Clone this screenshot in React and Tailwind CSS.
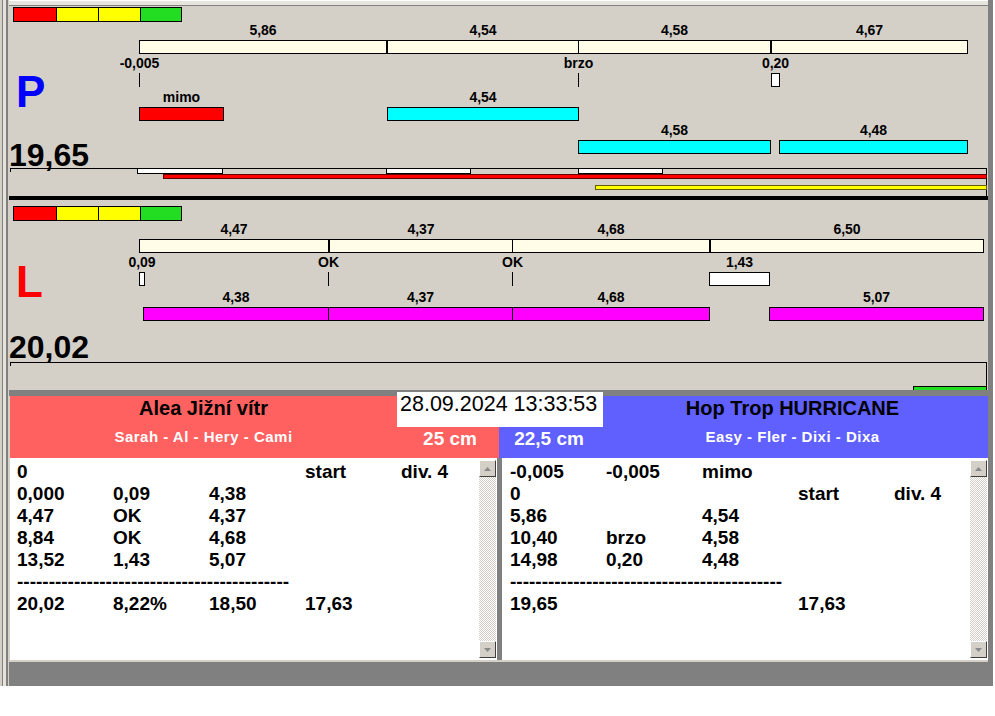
import React from "react";

// panel coordinates are relative to the chart panel (x from 9, y from top of panel)
const panelP = {
  top: [
    { x0: 130, x1: 377, label: "5,86" },
    { x0: 378, x1: 569, label: "4,54" },
    { x0: 569, x1: 761, label: "4,58" },
    { x0: 762, x1: 958, label: "4,67" },
  ],
  topY: 34,
  marksY: 67,
  marks: [
    { kind: "tick", x: 130, label: "-0,005" },
    { kind: "tick", x: 569, label: "brzo" },
    { kind: "box", x0: 762, x1: 770, label: "0,20" },
  ],
  rows: [
    { y: 101, bars: [
      { x0: 130, x1: 214, label: "mimo", color: "bg-[#ff0000]" },
      { x0: 378, x1: 569, label: "4,54", color: "bg-[#00ffff]" },
    ] },
    { y: 134, bars: [
      { x0: 569, x1: 761, label: "4,58", color: "bg-[#00ffff]" },
      { x0: 770, x1: 958, label: "4,48", color: "bg-[#00ffff]" },
    ] },
  ],
};

const panelL = {
  top: [
    { x0: 130, x1: 319, label: "4,47" },
    { x0: 320, x1: 503, label: "4,37" },
    { x0: 503, x1: 700, label: "4,68" },
    { x0: 701, x1: 974, label: "6,50" },
  ],
  topY: 39,
  marksY: 72,
  marks: [
    { kind: "box", x0: 130, x1: 135, label: "0,09" },
    { kind: "tick", x: 319, label: "OK" },
    { kind: "tick", x: 503, label: "OK" },
    { kind: "box", x0: 700, x1: 760, label: "1,43" },
  ],
  rows: [
    { y: 107, bars: [
      { x0: 134, x1: 319, label: "4,38", color: "bg-[#ff00ff]" },
      { x0: 319, x1: 503, label: "4,37", color: "bg-[#ff00ff]" },
      { x0: 503, x1: 700, label: "4,68", color: "bg-[#ff00ff]" },
      { x0: 760, x1: 974, label: "5,07", color: "bg-[#ff00ff]" },
    ] },
  ],
};

const dashes = "-".repeat(43);

const listLeft = [
  ["0", "", "", "start", "div. 4"],
  ["0,000", "0,09", "4,38"],
  ["4,47", "OK", "4,37"],
  ["8,84", "OK", "4,68"],
  ["13,52", "1,43", "5,07"],
  [dashes],
  ["20,02", "8,22%", "18,50", "17,63"],
];

const listRight = [
  ["-0,005", "-0,005", "mimo"],
  ["0", "", "", "start", "div. 4"],
  ["5,86", "", "4,54"],
  ["10,40", "brzo", "4,58"],
  ["14,98", "0,20", "4,48"],
  [dashes],
  ["19,65", "", "", "17,63"],
];

function Label({ x, y, children }) {
  return (
    <span
      className="absolute -translate-x-1/2 whitespace-nowrap text-[14px] font-bold leading-[14px] text-black"
      style={{ left: x, top: y - 17 }}
    >
      {children}
    </span>
  );
}

function Bar({ x0, x1, y, color, label }) {
  return (
    <>
      <div
        className={`absolute h-[14px] border border-black ${color}`}
        style={{ left: x0, top: y, width: x1 - x0 + 1 }}
      />
      {label && <Label x={(x0 + x1 + 1) / 2} y={y}>{label}</Label>}
    </>
  );
}

function Indicator({ top }) {
  return (
    <div className="absolute left-[4px] flex h-[15px] border border-black" style={{ top }}>
      <div className="w-[42px] bg-[#ff0000]" />
      <div className="w-[42px] border-l border-black bg-[#ffff00]" />
      <div className="w-[42px] border-l border-black bg-[#ffff00]" />
      <div className="w-[41px] border-l border-black bg-[#22dd22]" />
    </div>
  );
}

function Chart({ data, letter, letterColor, total, letterTop, totalTop, indTop, children }) {
  return (
    <div className="relative h-[190px] overflow-hidden bg-[#d4d0c8]">
      <Indicator top={indTop} />
      {data.top.map((s) => (
        <Bar key={s.x0} {...s} y={data.topY} color="bg-[#fffce8]" />
      ))}
      {data.marks.map((m, i) =>
        m.kind === "tick" ? (
          <React.Fragment key={i}>
            <div className="absolute h-[14px] w-px bg-black" style={{ left: m.x, top: data.marksY }} />
            <Label x={m.x + 0.5} y={data.marksY}>{m.label}</Label>
          </React.Fragment>
        ) : (
          <Bar key={i} x0={m.x0} x1={m.x1} y={data.marksY} color="bg-white" label={m.label} />
        )
      )}
      {data.rows.map((r) =>
        r.bars.map((b) => <Bar key={`${r.y}-${b.x0}`} {...b} y={r.y} />)
      )}
      <span
        className={`absolute left-[7px] text-[44px] font-bold leading-[44px] ${letterColor}`}
        style={{ top: letterTop }}
      >
        {letter}
      </span>
      <span className="absolute left-0 text-[32px] font-bold leading-[32px] text-black" style={{ top: totalTop }}>
        {total}
      </span>
      {/* timeline at the bottom */}
      <div className="absolute left-[1px] top-[162px] h-px w-[977px] bg-black" />
      <div className="absolute left-[1px] top-[162px] h-[4px] w-px bg-black" />
      <div className="absolute left-[977px] top-[162px] h-[28px] w-px bg-black" />
      {children}
    </div>
  );
}

function ArrowButton({ down }) {
  return (
    <div className="flex h-[17px] w-[17px] items-center justify-center border border-t-white border-l-white border-r-[#404040] border-b-[#404040] bg-[#d4d0c8]">
      <svg width="7" height="4" viewBox="0 0 7 4">
        <path d={down ? "M0 0 L7 0 L3.5 4 Z" : "M0 4 L3.5 0 L7 4 Z"} fill="#8a8a8a" />
      </svg>
    </div>
  );
}

function ScrollBar() {
  return (
    <div className="flex h-full w-[17px] flex-col bg-[repeating-conic-gradient(#d4d0c8_0%_25%,#ffffff_0%_50%)] bg-[length:2px_2px]">
      <ArrowButton />
      <div className="flex-1" />
      <ArrowButton down />
    </div>
  );
}

function ListBox({ rows, width, pad }) {
  return (
    <div className="flex h-[202px] bg-white" style={{ width }}>
      <div
        className="min-w-0 flex-1 overflow-hidden pt-[3px] text-[19px] font-bold leading-[22px] text-black"
        style={{ paddingLeft: pad }}
      >
        {rows.map((r, i) => (
          <div key={i} className="flex h-[22px] whitespace-nowrap">
            {r.length === 1 ? (
              <div>{r[0]}</div>
            ) : (
              r.map((c, j) => (
                <div key={j} className="w-[96px] shrink-0">{c}</div>
              ))
            )}
          </div>
        ))}
      </div>
      <div className="shrink-0 py-[2px] pr-[1px]">
        <ScrollBar />
      </div>
    </div>
  );
}

export default function App() {
  return (
    <div className="relative h-[716px] w-[995px] overflow-hidden bg-white font-['Liberation_Sans',Arial,sans-serif]">
      <div className="flex h-[686px] w-[993px]">
        {/* left window frame */}
        <div className="flex w-[9px]">
          <div className="w-[2px] bg-[#d4d0c8]" />
          <div className="w-px bg-[#808080]" />
          <div className="w-[3px] bg-[#e6e3dc]" />
          <div className="w-[2px] bg-[#808080]" />
          <div className="w-px bg-[#d4d0c8]" />
        </div>

        <div className="flex w-[979px] flex-col">
          <div className="h-[6px] border-t border-t-white border-b border-b-[#808080] bg-[#e8e5de]" />

          <Chart data={panelP} letter="P" letterColor="text-[#0000ff]" total="19,65" letterTop={64} totalTop={133} indTop={1}>
            <div className="absolute left-[128px] top-[162px] h-[6px] w-[86px] border border-black bg-white" />
            <div className="absolute left-[377px] top-[162px] h-[6px] w-[85px] border border-black bg-white" />
            <div className="absolute left-[569px] top-[162px] h-[6px] w-[85px] border border-black bg-white" />
            <div className="absolute left-[154px] top-[168px] h-[5px] w-[824px] border border-[#600000] bg-[#ff0000]" />
            <div className="absolute left-[586px] top-[179px] h-[5px] w-[392px] border border-[#606000] bg-[#ffff00]" />
          </Chart>

          <div className="h-[4px] bg-black" />

          <Chart data={panelL} letter="L" letterColor="text-[#ff0000]" total="20,02" letterTop={60} totalTop={131} indTop={6}>
            <div className="absolute left-[904px] top-[186px] h-[6px] w-[74px] border border-black bg-[#22dd22]" />
          </Chart>

          <div className="h-[6px] bg-[#808080]" />

          {/* results panel */}
          <div className="flex h-[266px] flex-col bg-[#d4d0c8]">
            <div className="ml-px flex h-[62px]">
              <div className="flex w-[489px] bg-[#ff6060]">
                <div className="flex w-[387px] flex-col items-center">
                  <div className="text-[20px] font-bold leading-[24px] text-black">Alea Jižní vítr</div>
                  <div className="mt-[7px] text-[15px] font-bold leading-[20px] tracking-[0.5px] text-white">
                    Sarah - Al - Hery - Cami
                  </div>
                </div>
                <div className="flex-1 pl-[4px] pt-[32px] text-center text-[19px] font-bold leading-[22px] text-white">
                  25 cm
                </div>
              </div>
              <div className="flex w-[489px] bg-[#6060ff]">
                <div className="w-[104px] pr-[4px] pt-[32px] text-center text-[19px] font-bold leading-[22px] text-white">
                  22,5 cm
                </div>
                <div className="flex flex-1 flex-col items-center pr-[6px]">
                  <div className="text-[20px] font-bold leading-[24px] text-black">Hop Trop HURRICANE</div>
                  <div className="mt-[7px] text-[15px] font-bold leading-[20px] tracking-[0.5px] text-white">
                    Easy - Fler - Dixi - Dixa
                  </div>
                </div>
              </div>
            </div>
            <div className="flex pl-px">
              <ListBox rows={listLeft} width={487} pad={7} />
              <div className="h-[202px] w-[5px] bg-[#808080]" />
              <ListBox rows={listRight} width={486} pad={8} />
            </div>
          </div>

          <div className="h-[24px] bg-[#808080]" />
        </div>

        {/* right window frame */}
        <div className="w-[5px] bg-[#808080]" />
      </div>

      {/* date/time overlay */}
      <div className="absolute left-[397px] top-[392px] h-[35px] w-[206px] bg-white pl-[3px] text-[21.5px] leading-[24px] text-black">
        28.09.2024 13:33:53
      </div>
    </div>
  );
}
